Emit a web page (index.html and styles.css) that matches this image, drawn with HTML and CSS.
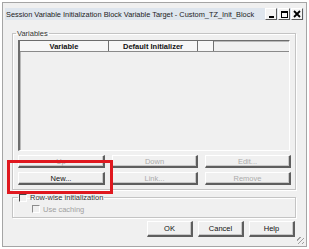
FILE: index.html
```html
<!DOCTYPE html>
<html>
<head>
    <title>Session Variable Initialization Block Variable Target</title>
    <link rel="stylesheet" href="styles.css">
</head>
<body>
    <div class="window">
        <div class="titlebar">
            <span class="title">Session Variable Initialization Block Variable Target - Custom_TZ_Init_Block</span>
            <div class="controls">
                <span class="ctl ctl-min"></span>
                <span class="ctl ctl-max"></span>
                <span class="ctl ctl-close">
                    <svg width="8" height="8" viewBox="0 0 8 8"><path d="M1 1 L7 7 M7 1 L1 7" stroke="#000" stroke-width="1.8"/></svg>
                </span>
            </div>
        </div>

        <fieldset class="group group-vars">
            <legend>Variables</legend>
            <div class="grid">
                <div class="grid-head">
                    <div class="th th-var">Variable</div>
                    <div class="th th-def">Default Initializer</div>
                    <div class="th th-extra"></div>
                </div>
            </div>
            <div class="actions">
                <button class="btn" disabled>Up</button>
                <button class="btn" disabled>Down</button>
                <button class="btn" disabled>Edit...</button>
                <button class="btn">New...</button>
                <button class="btn" disabled>Link...</button>
                <button class="btn" disabled>Remove</button>
            </div>
        </fieldset>

        <fieldset class="group group-row">
            <legend><span class="check"></span>Row-wise initialization</legend>
            <label class="option"><span class="check check-off"></span>Use caching</label>
        </fieldset>

        <div class="footer">
            <button class="btn btn-dlg">OK</button>
            <button class="btn btn-dlg">Cancel</button>
            <button class="btn btn-dlg">Help</button>
        </div>

        <div class="highlight"></div>
        <span class="grip"></span>
    </div>
</body>
</html>
```

FILE: styles.css
```css
body {
    margin: 0;
    background: #ffffff;
    font-family: "Liberation Sans", Arial, sans-serif;
    font-size: 7.5px;
    color: #1a1a1a;
}

.window {
    position: relative;
    box-sizing: border-box;
    width: 305px;
    height: 245px;
    margin: 2px 0 0 2px;
    border: 1px solid #a5a5a5;
    background: #f0f0f0;
}

.titlebar {
    display: flex;
    align-items: center;
    justify-content: space-between;
    height: 12px;
    margin: 5px 2px 0 2px;
    padding-left: 1px;
    background: #dfe6ee;
}

.title {
    font-size: 7.4px;
    color: #222;
    white-space: nowrap;
}

.controls {
    display: flex;
    margin-right: 1px;
}

.ctl {
    display: flex;
    align-items: center;
    justify-content: center;
    box-sizing: border-box;
    width: 12px;
    height: 12px;
    margin-left: 1px;
    background: #f4f4f4;
    border: 1px solid #ffffff;
    border-right-color: #5a5a5a;
    border-bottom-color: #5a5a5a;
}

.ctl-min::after {
    content: "";
    width: 5px;
    height: 2px;
    margin-top: 5px;
    background: #000;
}

.ctl-max::after {
    content: "";
    box-sizing: border-box;
    width: 7px;
    height: 7px;
    border: 1px solid #000;
    border-top-width: 2px;
}

.group {
    box-sizing: border-box;
    width: 284px;
    margin: 0 0 0 9px;
    border: 1px solid #c4c4c4;
    box-shadow: inset 1px 1px 0 #ffffff, 1px 1px 0 #ffffff;
    min-inline-size: 0;
}

.group legend {
    display: flex;
    align-items: center;
    height: 9px;
    padding: 0 1px;
    color: #333;
}

.group-vars {
    height: 161px;
    margin-top: 9px;
    padding: 2px 5px 0 5px;
}

.group-vars legend {
    margin-left: -2px;
}

.grid {
    box-sizing: border-box;
    width: 272px;
    height: 111px;
    border: 1px solid #fff;
    border-top-color: #6d6d6d;
    border-left: 2px solid #6d6d6d;
    box-shadow: inset 1px 1px 0 #b8b8b8;
    background: #f0f0f0;
}

.grid-head {
    display: flex;
    height: 10px;
    border-bottom: 1px solid #8a8a8a;
}

.th {
    box-sizing: border-box;
    display: flex;
    align-items: center;
    justify-content: center;
    height: 10px;
    font-weight: bold;
    color: #111;
    border-right: 1px solid #707070;
    background: #f7f7f7;
}

.th-var {
    width: 89px;
}

.th-def {
    width: 89px;
}

.th-extra {
    width: 16px;
}

.actions {
    display: grid;
    grid-template-columns: 87px 86px 86px;
    column-gap: 7px;
    row-gap: 4px;
    margin-top: 4px;
}

.btn {
    box-sizing: border-box;
    height: 13px;
    padding: 0;
    font-family: "Liberation Sans", Arial, sans-serif;
    font-size: 7.5px;
    color: #111;
    background: #f0f0f0;
    border: 1px solid #ffffff;
    border-right: 2px solid #5e5e5e;
    border-bottom: 2px solid #5e5e5e;
    box-shadow: inset -1px -1px 0 #c8c8c8;
}

.btn:disabled {
    color: #ababab;
}

.group-row {
    height: 25px;
    margin-top: 3px;
    padding: 0;
}

.group-row legend {
    margin-left: 5px;
}

.check {
    box-sizing: border-box;
    width: 8px;
    height: 8px;
    margin-right: 3px;
    border: 1px solid #fff;
    border-left-color: #444;
    border-top-color: #444;
    background: #f0f0f0;
}

.option {
    display: flex;
    align-items: center;
    height: 10px;
    margin: 2px 0 0 19px;
    color: #a0a0a0;
}

.check-off {
    border-left-color: #8c8c8c;
    border-top-color: #8c8c8c;
}

.footer {
    display: flex;
    justify-content: flex-end;
    gap: 5px;
    margin: 3px 11px 0 0;
}

.btn-dlg {
    width: 46px;
    height: 16px;
    color: #111;
}

.highlight {
    position: absolute;
    left: 4px;
    top: 157px;
    box-sizing: border-box;
    width: 106px;
    height: 34px;
    border: 3px solid #e0181f;
}

.grip {
    position: absolute;
    right: 2px;
    bottom: 2px;
    width: 7px;
    height: 7px;
    background: repeating-linear-gradient(135deg, transparent 0 2px, #a0a0a0 2px 3px);
}
```
